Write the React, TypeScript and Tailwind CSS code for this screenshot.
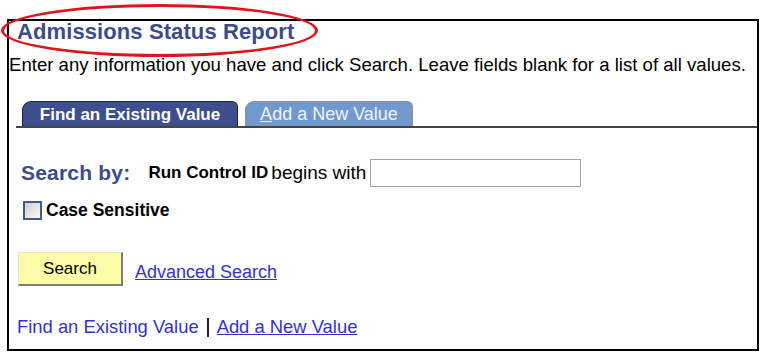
import React from 'react';

const FONT = { fontFamily: '"Liberation Sans", Arial, sans-serif' };

const TabBar = () => (
  <div className="ml-[7px] mt-[26px] flex items-end border-b-2 border-[#444]">
    <div className="ml-[6px] flex h-[25px] w-[216px] items-center justify-center rounded-tl-[9px] rounded-tr-[6px] border border-b-0 border-[#1c2448] bg-[#3e4f8e] text-[17px] font-bold leading-[19px] text-white">
      Find an Existing Value
    </div>
    <div className="ml-[7px] flex h-[25px] w-[168px] items-center justify-center rounded-tl-[9px] rounded-tr-[6px] border border-b-0 border-[#8a8f99] bg-[#7199cd] text-[18px] leading-[20px] text-[#eef3fb]">
      <span>
        <span className="underline">A</span>dd a New Value
      </span>
    </div>
  </div>
);

export default function App() {
  return (
    <div className="relative h-[353px] w-[761px] bg-white" style={FONT}>
      <div className="ml-[7px] flex h-[332px] w-[752px] translate-y-[19px] flex-col border-2 border-black">
        <h1 className="pl-[8px] text-[22px] font-bold leading-[22px] tracking-[0.1px] text-[#3d4b8a]">
          Admissions Status Report
        </h1>
        <p className="mt-[12px] whitespace-nowrap text-[18.6px] leading-[20px] text-black">
          Enter any information you have and click Search. Leave fields blank for a list of all values.
        </p>

        <TabBar />

        <div className="mt-[31px] flex h-[28px] items-center pl-[12px]">
          <span className="text-[21px] font-bold leading-[24px] tracking-[0.2px] text-[#3d4b8a]">Search by:</span>
          <span className="ml-[18px] text-[17px] font-bold leading-[20px] text-black">Run Control ID</span>
          <span className="ml-[3px] text-[19px] leading-[20px] text-black">begins with</span>
          <input
            type="text"
            className="ml-[4px] h-[28px] w-[211px] border border-[#a5a5a5] bg-white outline-none"
          />
        </div>

        <label className="mt-[13px] flex h-[20px] items-center pl-[14px]">
          <span className="h-[19px] w-[19px] border-2 border-[#3b5e8c] bg-gradient-to-br from-[#cfcfcf] to-[#fbfbfb]" />
          <span className="ml-[4px] text-[17.5px] font-bold leading-[20px] text-black">Case Sensitive</span>
        </label>

        <div className="mt-[32px] flex items-center pl-[9px]">
          <button className="h-[34px] w-[105px] border border-r-2 border-b-2 border-t-[#e6e6c0] border-l-[#e6e6c0] border-r-[#7d7d7d] border-b-[#7d7d7d] bg-[#fdfca8] text-[17px] leading-[20px] text-black">
            Search
          </button>
          <a href="#" className="ml-[12px] pt-[6px] text-[18px] leading-[20px] text-[#3333cc] underline">
            Advanced Search
          </a>
        </div>

        <div className="mt-[31px] flex items-center pl-[8px] text-[18.4px] leading-[20px]">
          <a href="#" className="text-[#3333cc]">Find an Existing Value</a>
          <span className="mx-[8px] h-[19px] w-[2px] bg-[#222]" />
          <a href="#" className="text-[#3333cc] underline">Add a New Value</a>
        </div>
      </div>

      <div className="pointer-events-none absolute left-[1px] top-[4px] h-[53px] w-[317px] rounded-[50%] border-[3px] border-[#e3121b]" />
    </div>
  );
}
